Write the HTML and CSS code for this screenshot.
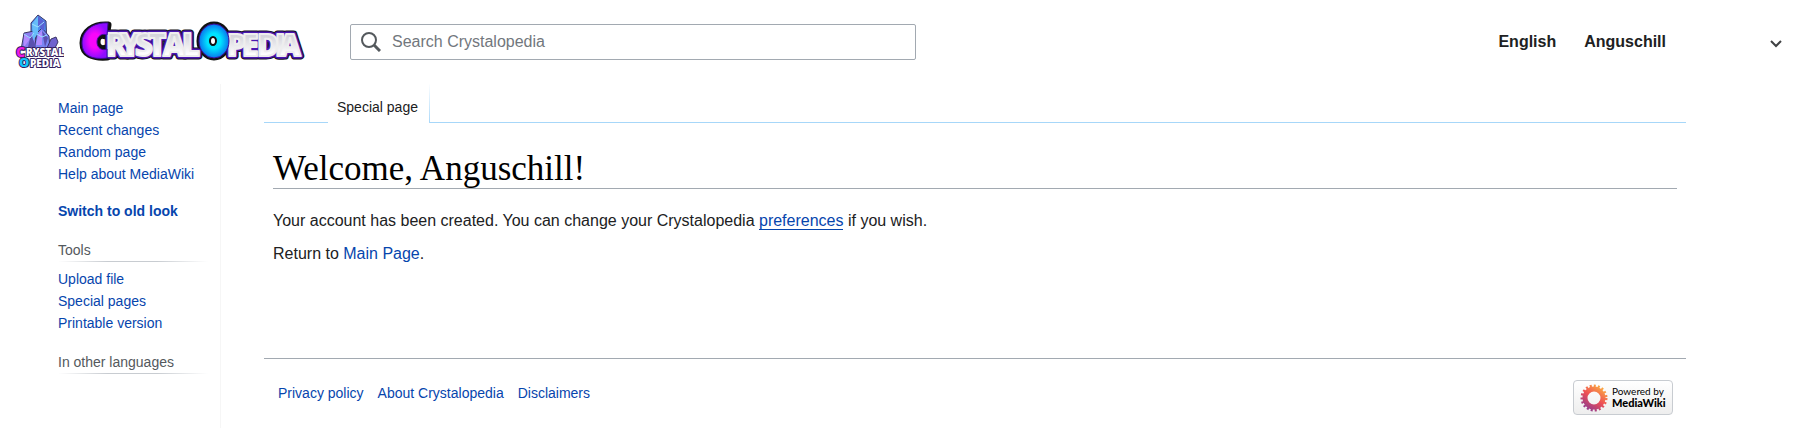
FILE: index.html
```html
<!DOCTYPE html>
<html lang="en">
<head>
    <meta charset="UTF-8">
    <meta name="viewport" content="width=device-width, initial-scale=1.0">
    <title>Welcome, Anguschill! - Crystalopedia</title>
    <link rel="stylesheet" href="styles.css">
</head>
<body>
    <header class="header">
        <a class="logo" href="#" aria-label="Crystalopedia">
            <svg class="logo-icon" width="50" height="60" viewBox="0 0 50 60">
                <g stroke="#3b3566" stroke-width="1" stroke-linejoin="round">
                    <path d="M17 34V11L24 3l8 6 1 25z" fill="#4b8df0"/>
                    <path d="M7 38l3-17 10-2 4 19z" fill="#8a7cf0"/>
                    <path d="M20 38l3-17 5-5 7 8 1 14z" fill="#7a86f4"/>
                    <path d="M33 36l4-9 5-2 2 5-3 6z" fill="#6f62cf"/>
                </g>
                <path d="M18 12l6-8v17l-5 8z" fill="#67bdf9"/>
                <path d="M24 4l7 6-1 9-6-5z" fill="#5a62d4"/>
                <path d="M10 22l6 5-6 8zM24 23l4-5v15h-6z" fill="#b28cff"/>
                <path d="M28 19l6 7-3 9zM17 22l5 13h-8z" fill="#5a50b0"/>
                <path d="M18 12l6 3 6-5M10 22l6 4 4-5M23 22l5 3 5-2" fill="none" stroke="#9be2ff"/>
                <g class="logo-letters" stroke-width="2">
                    <text x="2" y="45" font-size="14" fill="#ee19e8">C</text>
                    <text x="12" y="44" font-size="10" fill="#fff">RYSTAL</text>
                    <text x="5" y="55" font-size="13" fill="#12c5fb">O</text>
                    <text x="16" y="55" font-size="10" fill="#fff">PEDIA</text>
                </g>
            </svg>
            <svg class="logo-name" width="226" height="44" viewBox="0 0 226 44">
                <defs>
                    <radialGradient id="pink">
                        <stop offset="40%" stop-color="#f806fa"/>
                        <stop offset="100%" stop-color="#8d0cff"/>
                    </radialGradient>
                    <radialGradient id="cyan">
                        <stop offset="45%" stop-color="#00e4ff"/>
                        <stop offset="100%" stop-color="#0878ed"/>
                    </radialGradient>
                    <linearGradient id="silver" x1="0" y1="0" x2="0" y2="1">
                        <stop offset="30%" stop-color="#d5d5dc"/>
                        <stop offset="75%" stop-color="#fff"/>
                    </linearGradient>
                    <g id="wide-letters">
                        <text x="27 41 56 69 84 103" y="36" font-size="31">RYSTAL</text>
                        <text x="148 163 178 196 200" y="36" font-size="30">PEDIA</text>
                    </g>
                </defs>
                <g class="logo-letters">
                    <g class="glow-black">
                        <path d="M29 5C14 4 4 12 4 23s9 15 24 14l-1-9c-5 2-9-1-9-6 0-6 4-8 9-6z"/>
                        <use href="#wide-letters"/>
                        <ellipse cx="135" cy="21" rx="14" ry="16"/>
                    </g>
                    <use href="#wide-letters" class="glow-purple"/>
                    <use href="#wide-letters" fill="url(#silver)" stroke="#eee" stroke-width="2"/>
                </g>
                <path class="big-letter" d="M29 3C14 2 3 11 3 23s9 17 25 15v-9c-5 2-10-1-10-7s5-9 10-7z" fill="url(#pink)"/>
                <ellipse class="big-letter" cx="135" cy="21" rx="15" ry="17" fill="url(#cyan)"/>
                <ellipse cx="134" cy="21" rx="3" ry="4" fill="#fff" stroke="#111" stroke-width="2"/>
            </svg>
        </a>
        <form class="search">
            <svg width="20" height="20" viewBox="0 0 20 20">
                <circle cx="8" cy="8" r="7" fill="none" stroke="#54595d" stroke-width="2"/>
                <path d="M13 13l6 6" stroke="#54595d" stroke-width="3"/>
            </svg>
            <input type="search" placeholder="Search Crystalopedia" aria-label="Search Crystalopedia">
        </form>
        <nav class="user-links">
            <a href="#">English</a>
            <a href="#">Anguschill</a>
            <button type="button" class="user-menu" aria-label="Personal menu">
                <svg width="12" height="8" viewBox="0 0 12 8">
                    <path d="M1 1l5 5 5-5" fill="none" stroke="#404244" stroke-width="2"/>
                </svg>
            </button>
        </nav>
    </header>

    <div class="page">
        <nav class="sidebar">
            <ul>
                <li><a href="#">Main page</a></li>
                <li><a href="#">Recent changes</a></li>
                <li><a href="#">Random page</a></li>
                <li><a href="#">Help about MediaWiki</a></li>
            </ul>
            <a class="old-look" href="#">Switch to old look</a>
            <h3>Tools</h3>
            <ul>
                <li><a href="#">Upload file</a></li>
                <li><a href="#">Special pages</a></li>
                <li><a href="#">Printable version</a></li>
            </ul>
            <h3>In other languages</h3>
        </nav>

        <div class="main">
            <div class="tabs">
                <a class="tab" href="#">Special page</a>
            </div>
            <main class="content">
                <h1>Welcome, Anguschill!</h1>
                <p>Your account has been created. You can change your Crystalopedia <a class="underlined" href="#">preferences</a> if you wish.</p>
                <p>Return to <a href="#">Main Page</a>.</p>
            </main>
            <footer class="footer">
                <ul>
                    <li><a href="#">Privacy policy</a></li>
                    <li><a href="#">About Crystalopedia</a></li>
                    <li><a href="#">Disclaimers</a></li>
                </ul>
                <a class="powered" href="#">
                    <svg width="28" height="28" viewBox="-14 -14 28 28">
                        <defs>
                            <linearGradient id="flower" gradientUnits="userSpaceOnUse" x1="8" y1="-12" x2="-8" y2="12">
                                <stop offset="0%" stop-color="#fcb040"/>
                                <stop offset="50%" stop-color="#ee4f55"/>
                                <stop offset="100%" stop-color="#8c3a93"/>
                            </linearGradient>
                        </defs>
                        <circle r="9" fill="none" stroke="url(#flower)" stroke-width="5"/>
                        <circle r="12" fill="none" stroke="url(#flower)" stroke-width="3" stroke-dasharray="2 2"/>
                    </svg>
                    <span>Powered by<br><b>MediaWiki</b></span>
                </a>
            </footer>
        </div>
    </div>
</body>
</html>
```
FILE: styles.css
```css
body {
    margin: 0;
    font-family: Arial, "Liberation Sans", sans-serif;
    font-size: 16px;
    line-height: 22px;
    color: #202122;
    background-color: #fff;
}
a {
    color: #0645ad;
    text-decoration: none;
}
ul {
    margin: 0;
    padding: 0;
    list-style: none;
}
.header {
    display: flex;
    align-items: center;
    height: 84px;
    padding: 0 32px 0 14px;
}
.logo {
    display: flex;
    align-items: center;
    gap: 15px;
    margin-right: 45px;
}
.logo-letters {
    font-family: "Open Sans", sans-serif;
    font-weight: 800;
    stroke-linejoin: round;
}
.logo-icon .logo-letters {
    stroke: #33205f;
    paint-order: stroke;
}
.glow-black {
    fill: #111;
    stroke: #111;
    stroke-width: 7px;
}
.glow-purple {
    fill: #4a16b0;
    stroke: #4a16b0;
    stroke-width: 5px;
}
.big-letter {
    stroke: #3d0b9c;
    stroke-width: 1px;
}
.search {
    display: flex;
    align-items: center;
    gap: 11px;
    flex: 0 1 566px;
    box-sizing: border-box;
    height: 36px;
    padding: 0 10px;
    border: 1px solid #a2a9b1;
    border-radius: 2px;
}
.search input {
    flex: 1;
    border: none;
    outline: 0;
    padding: 0;
    font: inherit;
    background: none;
}
.search input::placeholder {
    color: #72777d;
}
.user-links {
    display: flex;
    align-items: center;
    gap: 28px;
    margin-left: auto;
}
.user-links a {
    color: #202122;
    font-weight: bold;
}
.user-menu {
    display: flex;
    justify-content: flex-end;
    width: 88px;
    padding: 4px 0 0;
    border: none;
    background: none;
}
.page {
    display: flex;
    gap: 43px;
    padding-right: 128px;
}
.sidebar {
    flex: none;
    box-sizing: border-box;
    width: 221px;
    height: 344px;
    padding: 13px 12px 0 58px;
    border-right: 1px solid #f6f6f6;
    font-size: 14px;
}
.old-look {
    display: block;
    margin-top: 15px;
    font-weight: bold;
}
.sidebar h3 {
    margin: 17px 0 6px;
    padding-bottom: 1px;
    font-size: 14px;
    font-weight: normal;
    color: #54595d;
    background: linear-gradient(to right, transparent, #c8ccd1 33%, #c8ccd1 66%, transparent) bottom / 100% 1px no-repeat;
}
.main {
    flex: 1;
}
.tabs {
    display: flex;
    height: 39px;
}
.tabs::before {
    content: "";
    width: 64px;
    border-bottom: 1px solid #a7d7f9;
}
.tabs::after {
    content: "";
    flex: 1;
    border-bottom: 1px solid #a7d7f9;
}
.tab {
    padding: 12px 11px 0 9px;
    border-right: 1px solid;
    border-image: linear-gradient(#fff, #a7d7f9) 1;
    font-size: 14px;
    color: #202122;
}
.content {
    padding: 26px 9px 0;
}
h1 {
    margin: 0 0 21px;
    border-bottom: 1px solid #a2a9b1;
    font-family: Georgia, "Liberation Serif", serif;
    font-size: 35px;
    font-weight: normal;
    line-height: 39px;
    color: #000;
}
p {
    margin: 0 0 11px;
}
.underlined {
    border-bottom: 1px solid #0645ad;
}
.footer {
    display: flex;
    justify-content: space-between;
    margin-top: 93px;
    padding: 21px 13px 0 14px;
    border-top: 1px solid #a2a9b1;
    font-size: 14px;
}
.footer ul {
    display: flex;
    gap: 14px;
    padding-top: 2px;
}
.powered {
    display: flex;
    align-items: center;
    gap: 4px;
    box-sizing: border-box;
    width: 100px;
    height: 35px;
    padding-left: 6px;
    border: 1px solid #c8ccd1;
    border-radius: 4px;
    background: linear-gradient(#fff, #eee);
    font-family: Lato, sans-serif;
    font-size: 10px;
    line-height: 11px;
    color: #000;
}
.powered span {
    white-space: nowrap;
}
.powered b {
    font-size: 11px;
    font-weight: 900;
}
```
